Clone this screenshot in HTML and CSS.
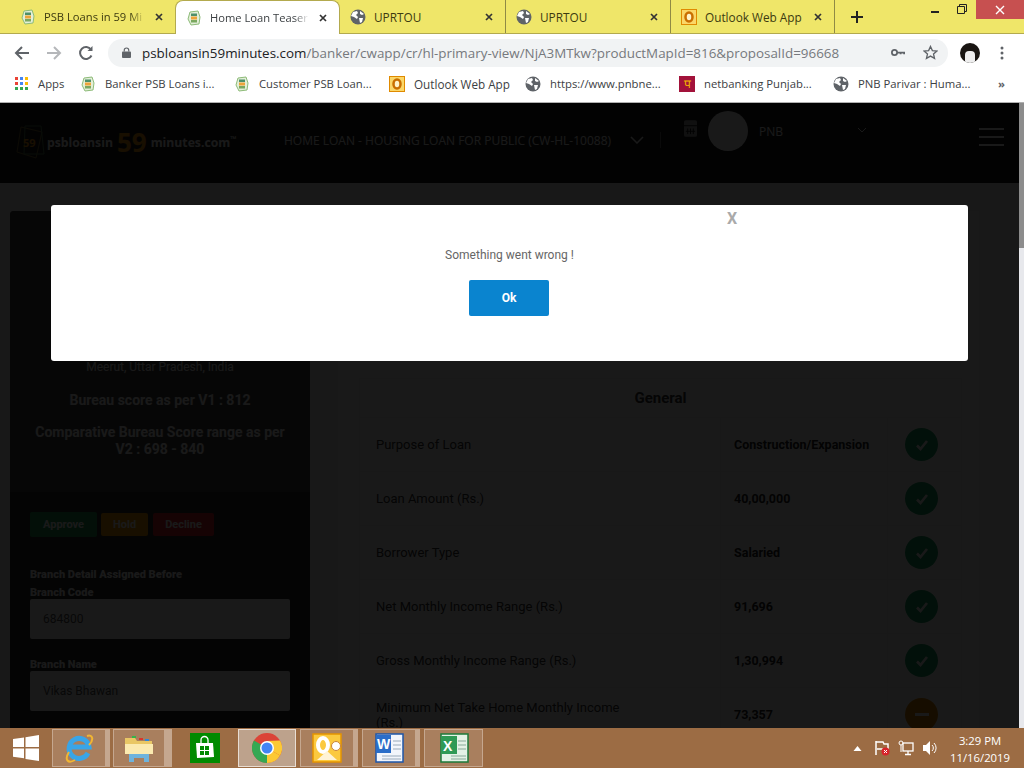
FILE: index.html
```html
<!DOCTYPE html>
<html lang="en">
<head>
    <meta charset="UTF-8">
    <title>Home Loan Teaser</title>
    <link rel="stylesheet" href="styles.css">
</head>
<body>
<svg class="sprites" width="0" height="0">
    <symbol id="leaf" viewBox="0 0 16 16">
        <path d="M4 2l8-1 2 6-1 7-8 1-3-6z" fill="#e3efd8" stroke="#8dbb78"/>
        <rect x="5" y="3.500" width="6" height="2.500" fill="#4d8f6a"/>
        <rect x="5" y="6.500" width="6" height="3" fill="#eda43a"/>
        <rect x="5" y="10" width="6" height="2.500" fill="#7aa860"/>
    </symbol>
    <symbol id="globe" viewBox="0 0 16 16">
        <circle cx="8" cy="8" r="7.500" fill="#5f6368"/>
        <path d="M3 3l4-1 1 2-2 2 2 2-1 2-3-2-3-1zM9 9l4 0-1 4-2 1zM10 2l4 3-2 1-2-1z" fill="#fff"/>
    </symbol>
    <symbol id="outlook" viewBox="0 0 16 16">
        <rect x="0.500" y="0.500" width="15" height="15" fill="#fbd768" stroke="#e08a00"/>
        <ellipse cx="8" cy="8" rx="3.500" ry="4.500" fill="#fff3c8" stroke="#c96f00" stroke-width="2.500"/>
    </symbol>
    <symbol id="tabx" viewBox="0 0 8 8">
        <path d="M1 1l6 6M7 1L1 7" stroke="#333" stroke-width="1.700"/>
    </symbol>
    <symbol id="tick" viewBox="0 0 14 14">
        <path d="M2 7.500l3.500 3.500L12 3" fill="none" stroke="#fff" stroke-width="2.600"/>
    </symbol>
</svg>

<div class="browser">
    <div class="tabstrip">
        <div class="tab"><svg class="favicon"><use href="#leaf"/></svg><span class="tab-title tab-fade">PSB Loans in 59 Mi</span><svg class="tab-close"><use href="#tabx"/></svg></div>
        <div class="tab tab-active"><svg class="favicon"><use href="#leaf"/></svg><span class="tab-title tab-fade">Home Loan Teaser</span><svg class="tab-close"><use href="#tabx"/></svg></div>
        <div class="tab"><svg class="favicon"><use href="#globe"/></svg><span class="tab-title">UPRTOU</span><svg class="tab-close"><use href="#tabx"/></svg></div>
        <div class="tab tab-sep"><svg class="favicon"><use href="#globe"/></svg><span class="tab-title">UPRTOU</span><svg class="tab-close"><use href="#tabx"/></svg></div>
        <div class="tab tab-sep tab-last"><svg class="favicon"><use href="#outlook"/></svg><span class="tab-title">Outlook Web App</span><svg class="tab-close"><use href="#tabx"/></svg></div>
        <svg class="new-tab" viewBox="0 0 12 12"><path d="M6 0v12M0 6h12" stroke="#222" stroke-width="2"/></svg>
        <div class="window-btns">
            <span class="win-min"></span>
            <svg class="win-max" viewBox="0 0 10 10"><path d="M2.500 2.500V.5h7v7h-2M.5 2.500h7v7h-7z" fill="none" stroke="#222"/></svg>
            <span class="win-close"><svg viewBox="0 0 10 10"><path d="M1 1l8 8M9 1l-8 8" stroke="#fff" stroke-width="1.400"/></svg></span>
        </div>
    </div>

    <div class="toolbar">
        <svg class="nav-icon" viewBox="0 0 16 16"><path d="M15 8H2M8 2L2 8l6 6" fill="none" stroke="#5f6368" stroke-width="2"/></svg>
        <svg class="nav-icon" viewBox="0 0 16 16"><path d="M1 8h13M8 2l6 6-6 6" fill="none" stroke="#b5b7ba" stroke-width="2"/></svg>
        <svg class="nav-icon" viewBox="0 0 16 16"><path d="M13.500 10.500A6 6 0 1 1 13 4.500" fill="none" stroke="#5f6368" stroke-width="2"/><path d="M14.500 1v5h-5z" fill="#5f6368"/></svg>
        <div class="omnibox">
            <svg class="lock" viewBox="0 0 10 12"><path d="M2.500 5V3.500a2.500 2.500 0 0 1 5 0V5" fill="none" stroke="#5f6368" stroke-width="1.300"/><rect y="5" width="10" height="7" rx="1" fill="#5f6368"/></svg>
            <span class="url"><span class="url-host">psbloansin59minutes.com</span>/banker/cwapp/cr/hl-primary-view/NjA3MTkw?productMapId=816&amp;proposalId=96668</span>
            <svg class="key" viewBox="0 0 16 8"><circle cx="4" cy="4" r="3" fill="none" stroke="#5f6368" stroke-width="2"/><path d="M7 3h9v3h-2V5h-2v1h-2V5H7z" fill="#5f6368"/></svg>
            <svg class="star" viewBox="0 0 16 16"><path d="M8 1.500l2 4.500 4.800.4-3.600 3.200 1.100 4.700L8 11.800l-4.300 2.500 1.100-4.700L1.200 6.400 6 6z" fill="none" stroke="#5f6368" stroke-width="1.400"/></svg>
        </div>
        <span class="avatar"><span class="avatar-shirt"></span></span>
        <svg class="menu-dots" viewBox="0 0 4 14"><circle cx="2" cy="2" r="1.500"/><circle cx="2" cy="7" r="1.500"/><circle cx="2" cy="12" r="1.500"/></svg>
    </div>

    <div class="bookmarks">
        <div class="bm bm-apps"><span class="apps-grid"><i></i><i></i><i></i><i></i><i></i><i></i><i></i><i></i><i></i></span>Apps</div>
        <div class="bm bm-w1"><svg class="favicon"><use href="#leaf"/></svg>Banker PSB Loans i...</div>
        <div class="bm bm-w2"><svg class="favicon"><use href="#leaf"/></svg>Customer PSB Loan...</div>
        <div class="bm bm-w3"><svg class="favicon"><use href="#outlook"/></svg>Outlook Web App</div>
        <div class="bm bm-w4"><svg class="favicon"><use href="#globe"/></svg>https://www.pnbne...</div>
        <div class="bm bm-w5"><span class="pnb-icon">प</span>netbanking Punjab...</div>
        <div class="bm bm-w6"><svg class="favicon"><use href="#globe"/></svg>PNB Parivar : Huma...</div>
        <span class="bm-more">»</span>
    </div>
</div>

<div class="viewport">
    <div class="page">
        <header class="site-header">
            <div class="logo">
                <svg class="logo-mark" viewBox="0 0 30 36"><path d="M5 3l21 5-6 26L1 28z" fill="none" stroke="#7d6a30"/><path d="M9 2h16l3 28H8z" fill="none" stroke="#4d7a50"/><text x="7" y="23" class="logo-mark-text">59</text></svg>
                <span class="logo-a">psbloansin</span><span class="logo-59">59</span><span class="logo-b">minutes.com</span><sup class="logo-tm">™</sup>
            </div>
            <div class="loan-title">HOME LOAN - HOUSING LOAN FOR PUBLIC (CW-HL-10088)</div>
            <svg class="chev-big" viewBox="0 0 14 8"><path d="M1 1l6 6 6-6" fill="none" stroke="#fff" stroke-width="1.500"/></svg>
            <span class="header-sep"></span>
            <svg class="cal" viewBox="0 0 14 18"><rect width="14" height="18" rx="2" fill="#fff"/><path d="M0 6h14M4 9v6M7 9v6M10 9v6M2 12h10" stroke="#000"/></svg>
            <span class="user-pic"></span>
            <span class="user-name">PNB</span>
            <svg class="chev-small" viewBox="0 0 10 6"><path d="M1 1l4 4 4-4" fill="none" stroke="#fff"/></svg>
            <div class="burger"><i></i><i></i><i></i></div>
        </header>

        <div class="content">
            <aside class="side">
                <div class="side-top">
                    <div class="side-place">Meerut, Uttar Pradesh, India</div>
                    <div class="side-score">Bureau score as per V1 : 812</div>
                    <div class="side-score">Comparative Bureau Score range as per V2 : 698 - 840</div>
                </div>
                <div class="side-form">
                    <div class="actions">
                        <span class="act act-approve">Approve</span>
                        <span class="act act-hold">Hold</span>
                        <span class="act act-decline">Decline</span>
                    </div>
                    <div class="field-head">Branch Detail Assigned Before</div>
                    <label class="field-label">Branch Code</label>
                    <div class="field-box">684800</div>
                    <label class="field-label field-gap">Branch Name</label>
                    <div class="field-box">Vikas Bhawan</div>
                </div>
            </aside>

            <section class="panel">
                <table class="matches">
                    <colgroup><col class="col-name"><col class="col-val"><col class="col-mark"></colgroup>
                    <tr><th colspan="3">General</th></tr>
                    <tr><td class="c-name">Purpose of Loan</td><td class="c-val">Construction/Expansion</td><td class="c-mark"><span class="mark ok"><svg class="tick"><use href="#tick"/></svg></span></td></tr>
                    <tr><td class="c-name">Loan Amount (Rs.)</td><td class="c-val">40,00,000</td><td class="c-mark"><span class="mark ok"><svg class="tick"><use href="#tick"/></svg></span></td></tr>
                    <tr><td class="c-name">Borrower Type</td><td class="c-val">Salaried</td><td class="c-mark"><span class="mark ok"><svg class="tick"><use href="#tick"/></svg></span></td></tr>
                    <tr><td class="c-name">Net Monthly Income Range (Rs.)</td><td class="c-val">91,696</td><td class="c-mark"><span class="mark ok"><svg class="tick"><use href="#tick"/></svg></span></td></tr>
                    <tr><td class="c-name">Gross Monthly Income Range (Rs.)</td><td class="c-val">1,30,994</td><td class="c-mark"><span class="mark ok"><svg class="tick"><use href="#tick"/></svg></span></td></tr>
                    <tr><td class="c-name">Minimum Net Take Home Monthly Income (Rs.)</td><td class="c-val">73,357</td><td class="c-mark"><span class="mark warn"><i class="dash"></i></span></td></tr>
                </table>
            </section>
        </div>
    </div>
    <div class="scrollbar"><div class="scroll-thumb"></div></div>

    <div class="backdrop"></div>
    <div class="modal">
        <span class="modal-x">X</span>
        <p class="modal-msg">Something went wrong !</p>
        <button class="modal-ok">Ok</button>
    </div>
</div>

<div class="taskbar">
    <div class="start">
        <svg viewBox="0 0 26 26"><path d="M0 4l11-1.600V12H0zM12.500 2.200L26 0v12H12.500zM0 13.500h11v9.800L0 21.800zM12.500 13.500H26V26l-13.500-2z" fill="#fff"/></svg>
    </div>
    <div class="task task-one">
        <svg viewBox="0 0 30 30"><path d="M24 20a10 10 0 1 1 1-6H7" fill="none" stroke="#39a5e8" stroke-width="5"/><path d="M23 3C29 1 30 7 25 12M5 19C0 27 4 31 11 27" fill="none" stroke="#f2b632" stroke-width="2"/></svg>
    </div>
    <div class="task task-two">
        <svg viewBox="0 0 30 30"><path d="M1 5h10l2 3h15v12H1z" fill="#e9c765"/><path d="M1 11h28v10H1z" fill="#fbeab0"/><path d="M5 29v-8h20v8h-5v-4H10v4z" fill="#6fb3dc"/><path d="M8 3h4v2H8z" fill="#35b34a"/><path d="M15 5h4v2h-4z" fill="#d9352b"/><path d="M21 6h4v2h-4z" fill="#2f86d8"/></svg>
    </div>
    <div class="task-plain">
        <svg class="store" viewBox="0 0 30 30"><rect width="30" height="30" fill="#008a00"/><path d="M6 10h17l1 14-17 1z" fill="#fff"/><path d="M11 10V7a3.500 3.500 0 0 1 7 0v3" fill="none" stroke="#fff" stroke-width="1.300"/><path d="M10 13h4v4h-4zM15 13h4v4h-4zM10 18h4v4h-4zM15 18h4v4h-4z" fill="#008a00"/></svg>
    </div>
    <div class="task task-active">
        <svg viewBox="0 0 30 30"><circle cx="15" cy="15" r="15" fill="#db4437"/><path d="M15 15L28 22.500A15 15 0 0 0 28 7.500L15 8z" fill="#fcc934"/><path d="M15 15L15 30A15 15 0 0 0 28 22.500z" fill="#fcc934"/><path d="M15 15V30A15 15 0 0 1 2 7.500z" fill="#34a853"/><circle cx="15" cy="15" r="7" fill="#fff"/><circle cx="15" cy="15" r="5.500" fill="#4285f4"/></svg>
    </div>
    <div class="task task-one task-end">
        <svg viewBox="0 0 30 30"><rect x="1" y="1" width="28" height="28" fill="#fbc93f" stroke="#e59400" stroke-width="1.500"/><ellipse cx="11" cy="12" rx="5" ry="7" fill="none" stroke="#fff" stroke-width="4"/><path d="M5 27l10-9 10 9z" fill="#fff3d6"/><circle cx="24" cy="13" r="4.500" fill="#fff" stroke="#c9853a"/></svg>
    </div>
    <div class="task task-one task-end">
        <svg viewBox="0 0 30 30"><rect x="2" y="1" width="27" height="28" fill="#f2f5fb" stroke="#1e56a8" stroke-width="1.500"/><path d="M2 2l15 0v18H2z" fill="#2a6dc8"/><text x="3" y="16" class="app-letter">W</text><path d="M19 8h8M19 12h8M19 16h8M8 23h19M8 26h19" stroke="#9ab"/></svg>
    </div>
    <div class="task task-last">
        <svg viewBox="0 0 30 30"><rect x="2" y="1" width="27" height="28" fill="#e4f2e6" stroke="#1c7a3a" stroke-width="1.500"/><path d="M2 3h16v18H2z" fill="#2f9a55"/><text x="4" y="18" class="app-letter">X</text><path d="M19 8h8M19 12h8M19 16h8M12 23h15M12 26h15" stroke="#8a9"/></svg>
    </div>
    <div class="tray">
        <svg class="tray-up" viewBox="0 0 8 5"><path d="M4 0l4 5H0z" fill="#fff"/></svg>
        <svg class="tray-flag" viewBox="0 0 16 16"><path d="M2 1v14M2 2h7l1 2h4v5H3" fill="none" stroke="#fff" stroke-width="1.500"/><circle cx="11.500" cy="11.500" r="4" fill="#d8232a"/><path d="M10 10l3 3M13 10l-3 3" stroke="#fff"/></svg>
        <svg class="tray-net" viewBox="0 0 16 16"><rect x="5" y="3" width="10" height="8" fill="none" stroke="#fff" stroke-width="1.300"/><path d="M10 11v3M7 14.500h6" stroke="#fff" stroke-width="1.300"/><rect x="1" y="1" width="4" height="4" rx="2" fill="none" stroke="#fff"/><path d="M3 5v7" stroke="#fff"/></svg>
        <svg class="tray-vol" viewBox="0 0 16 16"><path d="M1 5h3l4-4v14l-4-4H1z" fill="#fff"/><path d="M10 5a4 4 0 0 1 0 6M12 3a7 7 0 0 1 0 10" fill="none" stroke="#fff"/></svg>
        <div class="clock"><div>3:29 PM</div><div>11/16/2019</div></div>
    </div>
</div>
</body>
</html>
```
FILE: styles.css
```css
* {
    box-sizing: border-box;
}
html, body {
    margin: 0;
    height: 100%;
}
body {
    width: 1024px;
    height: 768px;
    overflow: hidden;
    display: flex;
    flex-direction: column;
    font-family: "Open Sans", "Noto Sans", sans-serif;
    background-color: #fff;
}
.sprites {
    position: absolute;
}

/* browser chrome */
.browser {
    height: 103px;
    flex: none;
    border-bottom: 1px solid #b0b0b0;
    background-color: #fff;
}
.tabstrip {
    height: 34px;
    display: flex;
    align-items: center;
    padding-left: 10px;
    background-color: #efe669;
    border-bottom: 1px solid #b3aa4e;
}
.tab {
    width: 165px;
    height: 33px;
    flex: none;
    display: flex;
    align-items: center;
    padding: 0 12px 0 10px;
    font-size: 11.800px;
    color: #3c3a10;
}
.tab-active {
    height: 34px;
    margin-top: 1px;
    background-color: #fff;
    color: #3c4043;
    border-radius: 8px 8px 0 0;
    border: 1px solid #b3aa4e;
    border-bottom: none;
}
.tab-sep {
    border-left: 1px solid #8f8a45;
}
.tab-last {
    border-right: 1px solid #8f8a45;
}
.tab-title {
    flex: 1;
    margin: 0 10px 0 8px;
    overflow: hidden;
    white-space: nowrap;
}
.tab-fade {
    font-size: 11.200px;
    -webkit-mask-image: linear-gradient(to right, #000 85%, transparent);
    mask-image: linear-gradient(to right, #000 85%, transparent);
}
.tab-close {
    width: 8px;
    height: 8px;
    flex: none;
}
.favicon {
    width: 16px;
    height: 16px;
    flex: none;
}
.new-tab {
    width: 12px;
    height: 12px;
    margin-left: 16px;
}
.window-btns {
    display: flex;
    align-items: flex-start;
    align-self: flex-start;
    margin-left: auto;
}
.win-min {
    width: 8px;
    height: 2px;
    margin: 11px 18px 0 0;
    background-color: #222;
}
.win-max {
    width: 10px;
    height: 10px;
    margin: 4px 9px 0 0;
}
.win-close {
    width: 48px;
    height: 19px;
    display: flex;
    align-items: center;
    justify-content: center;
    background-color: #c75050;
}
.win-close svg {
    width: 10px;
    height: 10px;
}
.toolbar {
    height: 37px;
    display: flex;
    align-items: center;
    padding: 0 0 0 14px;
}
.nav-icon {
    width: 16px;
    height: 16px;
    margin-right: 16px;
}
.omnibox {
    width: 840px;
    height: 28px;
    margin-left: -2px;
    display: flex;
    align-items: center;
    padding: 0 10px 0 14px;
    background-color: #f1f3f4;
    border-radius: 14px;
}
.lock {
    width: 9px;
    height: 11px;
    margin-right: 11px;
}
.url {
    flex: 1;
    font-size: 13.400px;
    color: #76797d;
    white-space: nowrap;
}
.url-host {
    color: #202124;
}
.key {
    width: 14px;
    height: 7px;
    margin-right: 18px;
}
.star {
    width: 15px;
    height: 15px;
}
.avatar {
    width: 20px;
    height: 20px;
    margin-left: 12px;
    flex: none;
    border-radius: 50%;
    background-color: #191512;
    overflow: hidden;
    display: flex;
    justify-content: center;
    align-items: flex-end;
}
.avatar-shirt {
    width: 10px;
    height: 12px;
    background-color: #eee;
    border-radius: 4px 4px 0 0;
}
.menu-dots {
    width: 4px;
    height: 14px;
    margin-left: 20px;
    fill: #5f6368;
}
.bookmarks {
    height: 31px;
    display: flex;
    align-items: center;
    padding: 0 0 6px 15px;
    font-size: 11.300px;
    color: #3c4043;
}
.bm {
    display: flex;
    align-items: center;
    gap: 9px;
    flex: none;
    white-space: nowrap;
}
.bm-apps { width: 65px; gap: 10px; }
.bm-w1 { width: 154px; }
.bm-w2 { width: 155px; }
.bm-w3 { width: 136px; font-size: 11.700px; }
.bm-w4 { width: 154px; }
.bm-w5 { width: 154px; }
.bm-w6 { width: 165px; }
.bm-more {
    font-weight: 700;
    color: #5f6368;
}
.apps-grid {
    width: 13px;
    height: 13px;
    display: grid;
    grid-template-columns: repeat(3, 3px);
    gap: 2px;
    flex: none;
}
.apps-grid i:nth-child(3n+1) { background-color: #ea4335; }
.apps-grid i:nth-child(3n+2) { background-color: #4285f4; }
.apps-grid i:nth-child(3n) { background-color: #fbbc05; }
.apps-grid i:nth-child(n+7) { background-color: #34a853; }
.pnb-icon {
    width: 16px;
    height: 16px;
    flex: none;
    display: flex;
    align-items: center;
    justify-content: center;
    font-family: "DejaVu Sans", sans-serif;
    font-size: 12px;
    color: #f4b800;
    background-color: #a2123a;
}

/* the page behind the dialog */
.viewport {
    position: relative;
    flex: 1;
    display: flex;
    overflow: hidden;
}
.page {
    flex: 1;
    overflow: hidden;
    background-color: #f0f0f0;
    font-family: Roboto, sans-serif;
}
.scrollbar {
    width: 5px;
    flex: none;
    background-color: #e7e8ec;
}
.scroll-thumb {
    height: 145px;
    background-color: #8c8c8c;
}
.backdrop {
    position: absolute;
    top: 0;
    left: 0;
    right: 5px;
    bottom: 0;
    background-color: rgba(0, 0, 0, 0.9);
}
.site-header {
    height: 80px;
    display: flex;
    align-items: center;
    padding: 0 0 6px 16px;
    background-color: #1c1c1c;
    color: #fff;
}
.logo {
    width: 268px;
    margin-top: 4px;
    display: flex;
    align-items: center;
    font-family: "Open Sans", sans-serif;
    font-weight: 700;
    font-size: 12.200px;
}
.logo-mark {
    width: 30px;
    height: 36px;
    margin-right: 1px;
    flex: none;
}
.logo-mark-text {
    font-size: 11px;
    font-weight: 700;
    fill: #f29a11;
}
.logo-59 {
    margin: 0 4px;
    font-size: 26px;
    line-height: 24px;
    color: #f29a11;
}
.logo-tm {
    font-size: 8px;
    margin-bottom: 8px;
}
.loan-title {
    width: 338px;
    font-family: "Open Sans", sans-serif;
    font-size: 12px;
    white-space: nowrap;
}
.chev-big {
    width: 14px;
    height: 8px;
    margin-left: 8px;
}
.header-sep {
    width: 1px;
    height: 16px;
    margin-left: 16px;
    background-color: #666;
}
.cal {
    width: 13px;
    height: 17px;
    margin: 0 0 24px 23px;
    opacity: 0.6;
}
.user-pic {
    width: 40px;
    height: 40px;
    margin: 0 0 18px 11px;
    border-radius: 50%;
    background-color: #fff;
    flex: none;
}
.user-name {
    width: 98px;
    margin: 0 0 18px 11px;
    font-family: "Open Sans", sans-serif;
    font-size: 12px;
}
.chev-small {
    width: 10px;
    height: 6px;
    margin-bottom: 20px;
}
.burger {
    width: 25px;
    margin: 0 0 6px 112px;
    display: flex;
    flex-direction: column;
    gap: 6px;
}
.burger i {
    height: 2px;
    background-color: #fff;
}
.content {
    height: 545px;
    display: flex;
    padding: 28px 0 0 10px;
}
.side {
    width: 300px;
    flex: none;
    border-radius: 4px 4px 0 0;
    overflow: hidden;
    background-color: #2a2a2a;
}
.side-top {
    height: 281px;
    padding: 149px 20px 0;
    text-align: center;
    color: #fff;
    background-color: #444;
}
.side-place {
    font-size: 12px;
    margin-bottom: 18px;
}
.side-score {
    font-size: 14px;
    font-weight: 700;
    line-height: 17px;
    margin-bottom: 15px;
}
.side-form {
    padding: 20px;
    color: #fff;
}
.actions {
    display: flex;
    align-items: center;
    gap: 4px;
    margin-bottom: 31px;
}
.act {
    height: 23px;
    padding: 0 12px;
    display: flex;
    align-items: center;
    font-size: 11px;
    font-weight: 700;
    color: #fff;
    border-radius: 2px;
}
.act-approve { background-color: #1f9d55; height: 25px; padding: 0 13px; }
.act-hold { background-color: #ee9b00; }
.act-decline { background-color: #d9262b; margin-left: 1px; }
.field-head, .field-label {
    display: block;
    font-size: 11px;
    font-weight: 900;
    line-height: 14px;
    margin-bottom: 3px;
    color: #fff;
    white-space: nowrap;
}
.field-label {
    margin-bottom: 0;
    padding-top: 1px;
    line-height: 13px;
}
.field-gap {
    margin-top: 18px;
}
.field-box {
    height: 40px;
    padding: 0 13px;
    display: flex;
    align-items: center;
    font-size: 12px;
    color: #555;
    background-color: #fff;
    border-radius: 2px;
}
.panel {
    width: 641px;
    flex: none;
    margin-left: 28px;
    padding: 167px 18px 0 21px;
    background-color: #fff;
}
.matches {
    width: 602px;
    table-layout: fixed;
    border-collapse: collapse;
    font-size: 13px;
    color: #333;
}
.col-name { width: 361px; }
.col-val { width: 167px; }
.col-mark { width: 74px; }
.matches th {
    height: 39px;
    font-size: 15px;
    font-weight: 700;
    border: 1px solid #eee;
}
.matches td {
    height: 54px;
    border: 1px solid #eee;
}
.c-name {
    padding: 0 80px 0 16px;
    line-height: 15px;
}
.c-val {
    padding-left: 13px;
    font-size: 12.500px;
    font-weight: 700;
    color: #222;
}
.c-mark {
    padding-right: 7px;
    text-align: center;
}
.mark {
    width: 33px;
    height: 33px;
    display: inline-flex;
    align-items: center;
    justify-content: center;
    border-radius: 50%;
    vertical-align: middle;
}
.tick {
    width: 14px;
    height: 14px;
}
.dash {
    width: 14px;
    height: 3px;
    background-color: #fff;
}
.ok { background-color: #1aa064; }
.warn { background-color: #e08600; }

/* dialog */
.modal {
    position: absolute;
    left: 51px;
    top: 102px;
    width: 917px;
    height: 156px;
    padding-top: 43px;
    display: flex;
    flex-direction: column;
    align-items: center;
    background-color: #fff;
    border-radius: 3px;
    font-family: Roboto, sans-serif;
}
.modal-x {
    position: absolute;
    left: 676px;
    top: 4px;
    font-size: 16px;
    font-weight: 700;
    color: #aaa;
}
.modal-msg {
    margin: 0 0 18px;
    font-size: 12px;
    line-height: 14px;
    color: #666;
}
.modal-ok {
    width: 80px;
    height: 36px;
    margin-right: 1px;
    font-family: Roboto, sans-serif;
    font-size: 12px;
    font-weight: 700;
    color: #fff;
    border: none;
    border-radius: 2px;
    background-color: #0a84cf;
}

/* windows taskbar */
.taskbar {
    height: 40px;
    flex: none;
    display: flex;
    align-items: center;
    background-color: #9c6c44;
}
.start {
    width: 52px;
    display: flex;
    justify-content: center;
}
.start svg {
    width: 26px;
    height: 26px;
}
.task {
    height: 38px;
    display: flex;
    align-items: center;
    justify-content: center;
    background-color: #a97f5e;
    border: 1px solid #c5a78f;
}
.task svg {
    width: 30px;
    height: 30px;
}
.task-one {
    width: 58px;
    margin-right: 3px;
    border-right-width: 5px;
}
.task-two {
    width: 59px;
    border-right-width: 8px;
}
.task-end {
    margin-right: 4px;
}
.task-last {
    width: 59px;
}
.task-plain {
    width: 66px;
    display: flex;
    justify-content: center;
}
.store {
    width: 30px;
    height: 30px;
}
.task-active {
    width: 58px;
    margin-right: 4px;
    background-color: #bda28c;
    border-color: #e8ddd3;
}
.tray {
    margin-left: auto;
    display: flex;
    align-items: center;
    padding-right: 14px;
    color: #fff;
}
.tray svg {
    flex: none;
}
.tray-up {
    width: 9px;
    height: 5px;
    margin-right: 12px;
}
.tray-flag, .tray-net, .tray-vol {
    width: 16px;
    height: 16px;
    margin-right: 8px;
}
.tray-vol {
    margin-right: 12px;
}
.clock {
    padding-top: 2px;
    font-family: "Open Sans", sans-serif;
    font-size: 11.300px;
    line-height: 17px;
    text-align: center;
}
.app-letter {
    font-family: "Liberation Sans", sans-serif;
    font-size: 14px;
    font-weight: 700;
    fill: #fff;
}
```
